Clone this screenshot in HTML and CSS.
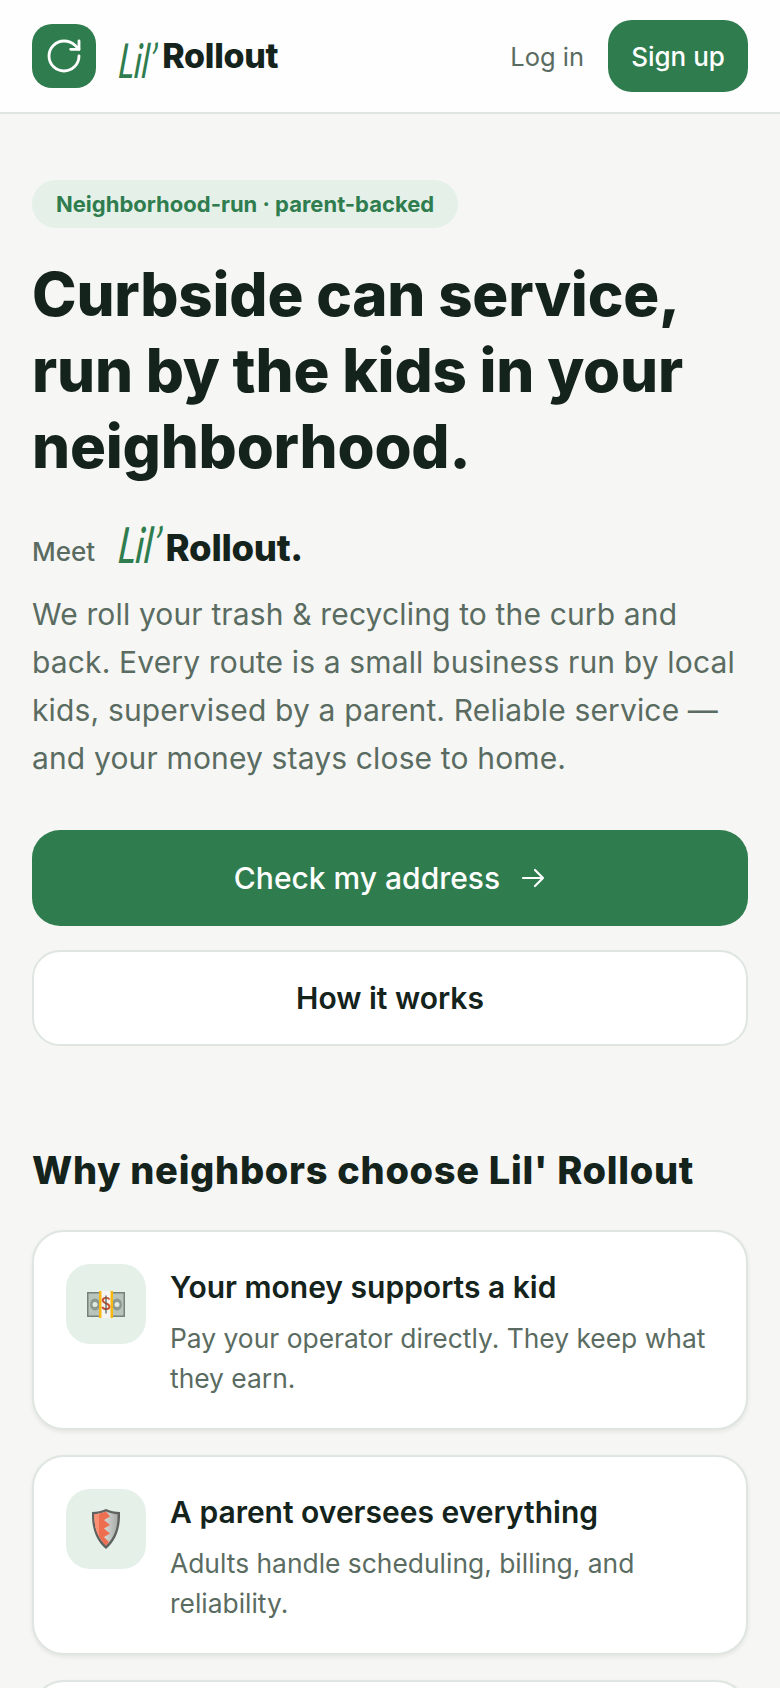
FILE: index.html
```html
<!DOCTYPE html>
<html lang="en">
<head>
  <meta charset="UTF-8">
  <meta name="viewport" content="width=device-width, initial-scale=1.0">
  <title>Lil' Rollout</title>
  <link rel="stylesheet" href="styles.css">
</head>
<body>
  <header class="topbar">
    <a class="brand">
      <span class="brand-icon">
        <svg width="40" height="40" viewBox="0 0 24 24" fill="none" stroke="#fff" stroke-width="1.7" stroke-linecap="round" stroke-linejoin="round">
          <path d="M21 12a9 9 0 1 1-9-9c2.52 0 4.93 1 6.74 2.74L21 8"/>
          <path d="M21 3v5h-5"/>
        </svg>
      </span>
      <span class="wordmark"><span class="script">Lil’</span>Rollout</span>
    </a>
    <nav class="topnav">
      <a class="login">Log in</a>
      <a class="signup">Sign up</a>
    </nav>
  </header>

  <main class="page">
    <section class="hero">
      <span class="pill">Neighborhood-run · parent-backed</span>
      <h1>Curbside can service, run by the kids in your neighborhood.</h1>
      <p class="meet">Meet <span class="wordmark wordmark-lg"><span class="script">Lil’</span>Rollout.</span></p>
      <p class="lead">We roll your trash &amp; recycling to the curb and back. Every route is a small business run by local kids, supervised by a parent. Reliable service — and your money stays close to home.</p>
      <a class="btn btn-primary">Check my address
        <svg width="26" height="26" viewBox="0 0 26 26" fill="none" stroke="#fff" stroke-width="2.2" stroke-linecap="round" stroke-linejoin="round"><path d="M3 13h20M15 5l8 8-8 8"/></svg>
      </a>
      <a class="btn btn-secondary">How it works</a>
    </section>

    <section class="why">
      <h2>Why neighbors choose Lil' Rollout</h2>

      <div class="card">
        <span class="card-icon">
          <svg width="40" height="28" viewBox="0 0 40 28">
            <rect x="1" y="2" width="38" height="25" fill="#75837a"/>
            <rect x="2.500" y="3.500" width="35" height="22" fill="#b9c4ba"/>
            <ellipse cx="9" cy="14.500" rx="5" ry="6" fill="#8b998e"/>
            <ellipse cx="31" cy="14.500" rx="5" ry="6" fill="#8b998e"/>
            <circle cx="9" cy="14.500" r="2.500" fill="#e3e9e3"/>
            <circle cx="31" cy="14.500" r="2.500" fill="#e3e9e3"/>
            <rect x="14" y="1" width="12" height="27" fill="#f4f5f3"/>
            <rect x="13" y="1" width="2.500" height="27" fill="#fbb90f"/>
            <rect x="24.500" y="1" width="2.500" height="27" fill="#fbb90f"/>
            <path d="M23.500 9.500c-.8-2-6.500-2.500-6.800.7-.3 3.500 6.800 2.600 6.800 6.300 0 3.500-6 3.200-7.200.3" fill="none" stroke="#c9502e" stroke-width="1.900"/>
            <path d="M20 5.500v18" stroke="#4d5a52" stroke-width="1.200"/>
          </svg>
        </span>
        <div class="card-body">
          <h3>Your money supports a kid</h3>
          <p>Pay your operator directly. They keep what they earn.</p>
        </div>
      </div>

      <div class="card">
        <span class="card-icon">
          <svg width="28" height="40" viewBox="0 0 28 40">
            <defs>
              <linearGradient id="steel" x1="0" x2="1" y1="0" y2="0">
                <stop offset="0" stop-color="#f6f7f5"/>
                <stop offset="1" stop-color="#a9aeaa"/>
              </linearGradient>
            </defs>
            <path d="M14 0c4 2 9 3 14 3 .6 14-3 28-14 37C3 31-.6 17 0 3c5 0 10-1 14-3z" fill="#5f625f"/>
            <path d="M14 2.500c3.500 1.500 8 2.500 11.500 2.700.5 12-2.500 23-11.500 31.300C5 28.200 2 17.200 2.500 5.200 6 5 10.500 4 14 2.500z" fill="url(#steel)"/>
            <path d="M14 2.500C10.500 4 6 5 2.500 5.200 2 17.200 5 28.200 14 36.500l3-3.500-5-5 6-3.500-6-5 6-3.500-6-5 6-3.500-4-5z" fill="#ee6f4f"/>
            <path d="M7 4.400C5.500 4.800 4 5.100 2.500 5.200 2.200 13 3.400 20.500 7 27z" fill="#fb8f74"/>
          </svg>
        </span>
        <div class="card-body">
          <h3>A parent oversees everything</h3>
          <p>Adults handle scheduling, billing, and reliability.</p>
        </div>
      </div>

      <div class="card"></div>
    </section>
  </main>
</body>
</html>
```

FILE: styles.css
```css
* { box-sizing: border-box; }
html, body { height: 100%; }
body { margin: 0; height: 1688px; overflow: hidden; background: #f6f6f4; color: #14231b; font-family: "Inter", "Noto Sans", sans-serif; }
h1, h2, h3, p { margin: 0; }

.topbar { display: flex; align-items: center; justify-content: space-between; height: 114px; padding: 0 32px; background: #fefefe; border-bottom: 2px solid #dfe6e1; }
.brand { display: flex; align-items: center; gap: 19px; }
.brand-icon { display: flex; align-items: center; justify-content: center; width: 64px; height: 64px; background: #2f7d4f; border-radius: 20px; }
.wordmark { display: inline-flex; align-items: baseline; font-family: "Inter", sans-serif; font-weight: 800; font-size: 34px; line-height: 40px; letter-spacing: -0.3px; color: #14231b; }
.script { display: inline-block; margin: 0 -2px 0 -4px; font-family: "Lato", sans-serif; font-style: italic; font-weight: 400; font-size: 48px; line-height: 0; color: #2f7d4f; transform: translateY(10px) scaleX(0.7) skewX(-8deg); }
.topnav { display: flex; align-items: center; gap: 24px; }
.login { font-size: 25.500px; color: #5a6c61; }
.signup { display: flex; align-items: center; justify-content: center; width: 140px; height: 72px; background: #2f7d4f; color: #fff; border-radius: 24px; font-size: 26px; font-weight: 500; }

.page { padding: 66px 32px 0; }
.pill { display: inline-block; height: 48px; line-height: 48px; padding: 0 24px; background: #e4f0e8; color: #2f7d4f; border-radius: 24px; font-size: 22px; font-weight: 700; }
h1 { margin-top: 28px; font-family: "Inter", sans-serif; font-weight: 800; font-size: 60px; line-height: 76px; letter-spacing: -0.2px; color: #14231b; }
.meet { display: flex; align-items: baseline; gap: 21px; margin-top: 44px; font-size: 26px; font-weight: 500; color: #5a6c61; }
.wordmark-lg { font-size: 36.500px; }
.wordmark-lg .script { font-size: 50px; transform: translateY(2px) scaleX(0.76) skewX(-8deg); }
.lead { margin-top: 22px; font-size: 30px; line-height: 48px; letter-spacing: 0.15px; color: #5a6c61; }

.btn { display: flex; align-items: center; justify-content: center; gap: 20px; height: 96px; border-radius: 28px; font-size: 30px; font-weight: 600; }
.btn-primary { margin-top: 48px; background: #2f7d4f; color: #fff; font-weight: 500; }
.btn-secondary { margin-top: 24px; background: #fff; border: 2px solid #dfe6e1; color: #14231b; }

.why { margin-top: 100px; }
h2 { font-family: "Inter", sans-serif; font-weight: 800; font-size: 38px; line-height: 48px; letter-spacing: 0.7px; color: #14231b; }
.card { display: flex; gap: 24px; margin-top: 25px; padding: 32px 32px 28px; min-height: 200px; background: #fff; border: 2px solid #dfe6e1; border-radius: 32px; box-shadow: 0 2px 4px rgba(20,35,27,0.08); }
.why h2 + .card { margin-top: 36px; }
.card-icon { display: flex; align-items: center; justify-content: center; flex: none; width: 80px; height: 80px; background: #e4f0e8; border-radius: 24px; }
h3 { font-size: 30px; line-height: 46px; font-weight: 600; color: #14231b; }
.card-body p { margin-top: 8px; font-size: 26.400px; line-height: 40px; color: #5a6c61; }
```
